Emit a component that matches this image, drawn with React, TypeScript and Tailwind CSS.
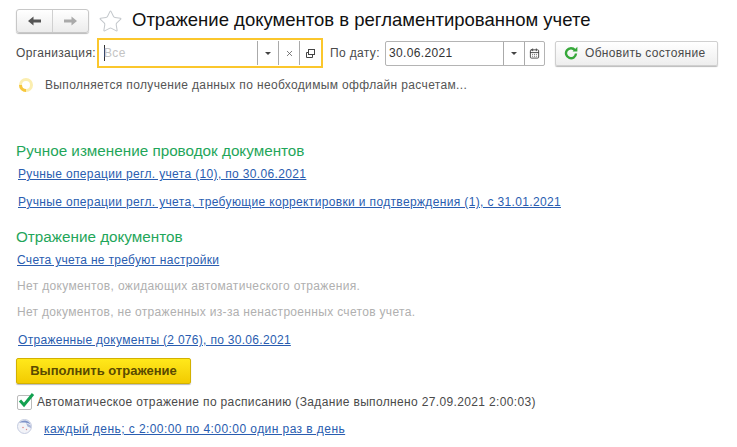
import { X, CalendarDays, Star } from "lucide-react";

const font = { fontFamily: '"Liberation Sans", Arial, sans-serif' };

function Caret() {
  return <span className="block w-0 h-0 border-x-[3px] border-x-transparent border-t-[3px] border-t-[#444]" />;
}

function CopyIcon() {
  return (
    <svg width="11" height="11" viewBox="0 0 11 11" fill="none" stroke="#444" strokeWidth="1">
      <rect x="3.5" y="1.5" width="6" height="5" />
      <path d="M3.5 4.5h-2v5h6v-3" />
    </svg>
  );
}

// стрелка навигации: треугольник и толстое древко
function NavArrow({ color, flip }: { color: string; flip?: boolean }) {
  return (
    <svg width="13" height="10" viewBox="0 0 13 10" className={flip ? "-scale-x-100" : ""}>
      <path d="M0 5 5.5 0.5V3.5H13V6.5H5.5V9.5Z" fill={color} />
    </svg>
  );
}

function RefreshIcon() {
  return (
    <svg width="14" height="14" viewBox="0 0 14 14" fill="none">
      <path d="M11 4.2A5 5 0 1 0 12 7.5" stroke="#36a83a" strokeWidth="2.4" />
      <path d="M8.6 5.4H13.4V0.8Z" fill="#36a83a" />
    </svg>
  );
}

function Spinner() {
  return (
    <svg width="16" height="16" viewBox="0 0 16 16" fill="none">
      <circle cx="8" cy="8" r="5.5" stroke="#fbeeb0" strokeWidth="3" />
      <path d="M2.5 8a5.5 5.5 0 0 0 5.5 5.5" stroke="#f7c63c" strokeWidth="3" />
    </svg>
  );
}

function Globe() {
  return (
    <svg width="15" height="15" viewBox="0 0 15 15">
      <circle cx="7.5" cy="7.5" r="7" fill="#f2f3f8" stroke="#c5cce0" />
      <path d="M2.2 4A6.6 6.6 0 0 1 13.5 5.5C11 3.6 5.5 3.2 2.2 4Z" fill="#7f93c8" />
      <path d="M9 4 13.8 6.5 14 9 10.5 7.5Z" fill="#a9b6d8" />
      <circle cx="6" cy="8.5" r="0.8" fill="#e08a8a" />
      <circle cx="9.5" cy="10.5" r="0.7" fill="#e08a8a" />
    </svg>
  );
}

export default function App() {
  return (
    <div className="w-[737px] h-[447px] bg-white overflow-hidden text-[12px] tracking-[0.35px] text-[#4a4a4a]" style={font}>
      <div className="flex items-center pl-4 pt-[7px] h-[35px]">
        <div className="flex w-[73px] h-[24px] border border-[#c8c8c8] rounded-[3px] bg-gradient-to-b from-white to-[#ececec] shadow-[0_1px_1px_#bbb]">
          <div className="flex-1 flex items-center justify-center border-r border-[#d0d0d0]">
            <NavArrow color="#555" />
          </div>
          <div className="flex-1 flex items-center justify-center">
            <NavArrow color="#aaa" flip />
          </div>
        </div>
        <Star size={25} strokeWidth={1} className="ml-[9px] text-[#c4c8cc]" />
        <h1 className="ml-[9px] -mt-[2px] text-[18.5px] tracking-normal leading-none text-[#111]">Отражение документов в регламентированном учете</h1>
      </div>

      <div className="flex items-center pl-4 mt-[3px] h-[30px]">
        <span className="w-[81px]">Организация:</span>
        <div className="flex items-center w-[226px] h-[30px] border-2 border-[#fbc72c]">
          <div className="flex-1 flex items-center pl-[5px] text-[#c4c4c4]">
            <span className="w-px h-[16px] bg-[#333]" />
            <span className="-ml-px">Все</span>
          </div>
          <div className="flex items-center justify-center w-[21px] h-[24px] border-l border-[#aaa]"><Caret /></div>
          <div className="flex items-center justify-center w-[21px] h-[24px] border-l border-[#aaa]"><X size={9} strokeWidth={2} className="text-[#555]" /></div>
          <div className="flex items-center justify-center w-[22px] h-[24px] border-l border-[#aaa]"><CopyIcon /></div>
        </div>
        <span className="ml-[7px] w-[55px] whitespace-nowrap">По дату:</span>
        <div className="flex items-center w-[160px] h-[25px] border border-[#b4b4b4] rounded-[2px]">
          <span className="flex-1 pl-[3px] text-[#333]">30.06.2021</span>
          <div className="flex items-center justify-center w-[21px] h-full border-l border-[#aaa]"><Caret /></div>
          <div className="flex items-center justify-center w-[20px] h-full border-l border-[#aaa]"><CalendarDays size={11} className="text-[#444]" /></div>
        </div>
        <div className="flex items-center ml-[10px] w-[163px] h-[25px] border border-[#d0d0d0] rounded-[2px] bg-gradient-to-b from-white to-[#eeeeee] shadow-[0_1px_1px_#bbb]">
          <span className="ml-[8px]"><RefreshIcon /></span>
          <span className="ml-[7px] tracking-[0.3px] whitespace-nowrap">Обновить состояние</span>
        </div>
      </div>

      <div className="flex items-center pl-[18px] mt-[9px] h-[16px]">
        <Spinner />
        <span className="ml-[11px] text-[#555]">Выполняется получение данных по необходимым оффлайн расчетам...</span>
      </div>

      <div className="pl-4 mt-[49px]">
        <div className="h-[18px] text-[15.25px] tracking-normal leading-[18px] text-[#1fa65a]">Ручное изменение проводок документов</div>
        <a className="block ml-[2px] mt-[6px] text-[#2a5db0] underline leading-[16px]">Ручные операции регл. учета (10), по 30.06.2021</a>
        <a className="block ml-[2px] mt-[12px] text-[#2a5db0] underline leading-[16px]">Ручные операции регл. учета, требующие корректировки и подтверждения (1), с 31.01.2021</a>
        <div className="mt-[18px] h-[18px] text-[15.25px] tracking-normal leading-[18px] text-[#1fa65a]">Отражение документов</div>
        <a className="block ml-[1px] mt-[6px] tracking-[0.3px] text-[#2a5db0] underline leading-[16px]">Счета учета не требуют настройки</a>
        <div className="mt-[10px] ml-px leading-[16px] text-[#b0b0b0]">Нет документов, ожидающих автоматического отражения.</div>
        <div className="mt-[10px] ml-px leading-[16px] tracking-[0.32px] text-[#b0b0b0]">Нет документов, не отраженных из-за ненастроенных счетов учета.</div>
        <a className="block ml-[2px] mt-[12px] tracking-[0.3px] text-[#2a5db0] underline leading-[16px]">Отраженные документы (2 076), по 30.06.2021</a>
        <div className="flex items-center justify-center mt-[10px] w-[175px] h-[26px] rounded-[2px] border border-[#d3b100] bg-gradient-to-b from-[#ffe81a] to-[#f2cb00] font-bold text-[13px] tracking-normal text-[#5a4a00] shadow-[0_1px_1px_#bbb]">
          Выполнить отражение
        </div>
        <div className="flex items-center mt-[10px] ml-px h-[16px]">
          <span className="relative w-[15px] h-[15px] border border-[#bbb] rounded-[2px] bg-white">
            <svg width="18" height="16" viewBox="0 0 18 16" fill="none" className="absolute -top-[4px] left-0">
              <path d="M2 8.5 6 13 15 2" stroke="#12a150" strokeWidth="3" />
            </svg>
          </span>
          <span className="ml-[5px]">Автоматическое отражение по расписанию (Задание выполнено 27.09.2021 2:00:03)</span>
        </div>
        <div className="flex items-center mt-[11px] ml-px h-[16px]">
          <span className="-mt-[6px]"><Globe /></span>
          <a className="ml-[12px] tracking-[0.43px] text-[#2a5db0] underline">каждый день; с 2:00:00 по 4:00:00 один раз в день</a>
        </div>
      </div>
    </div>
  );
}
